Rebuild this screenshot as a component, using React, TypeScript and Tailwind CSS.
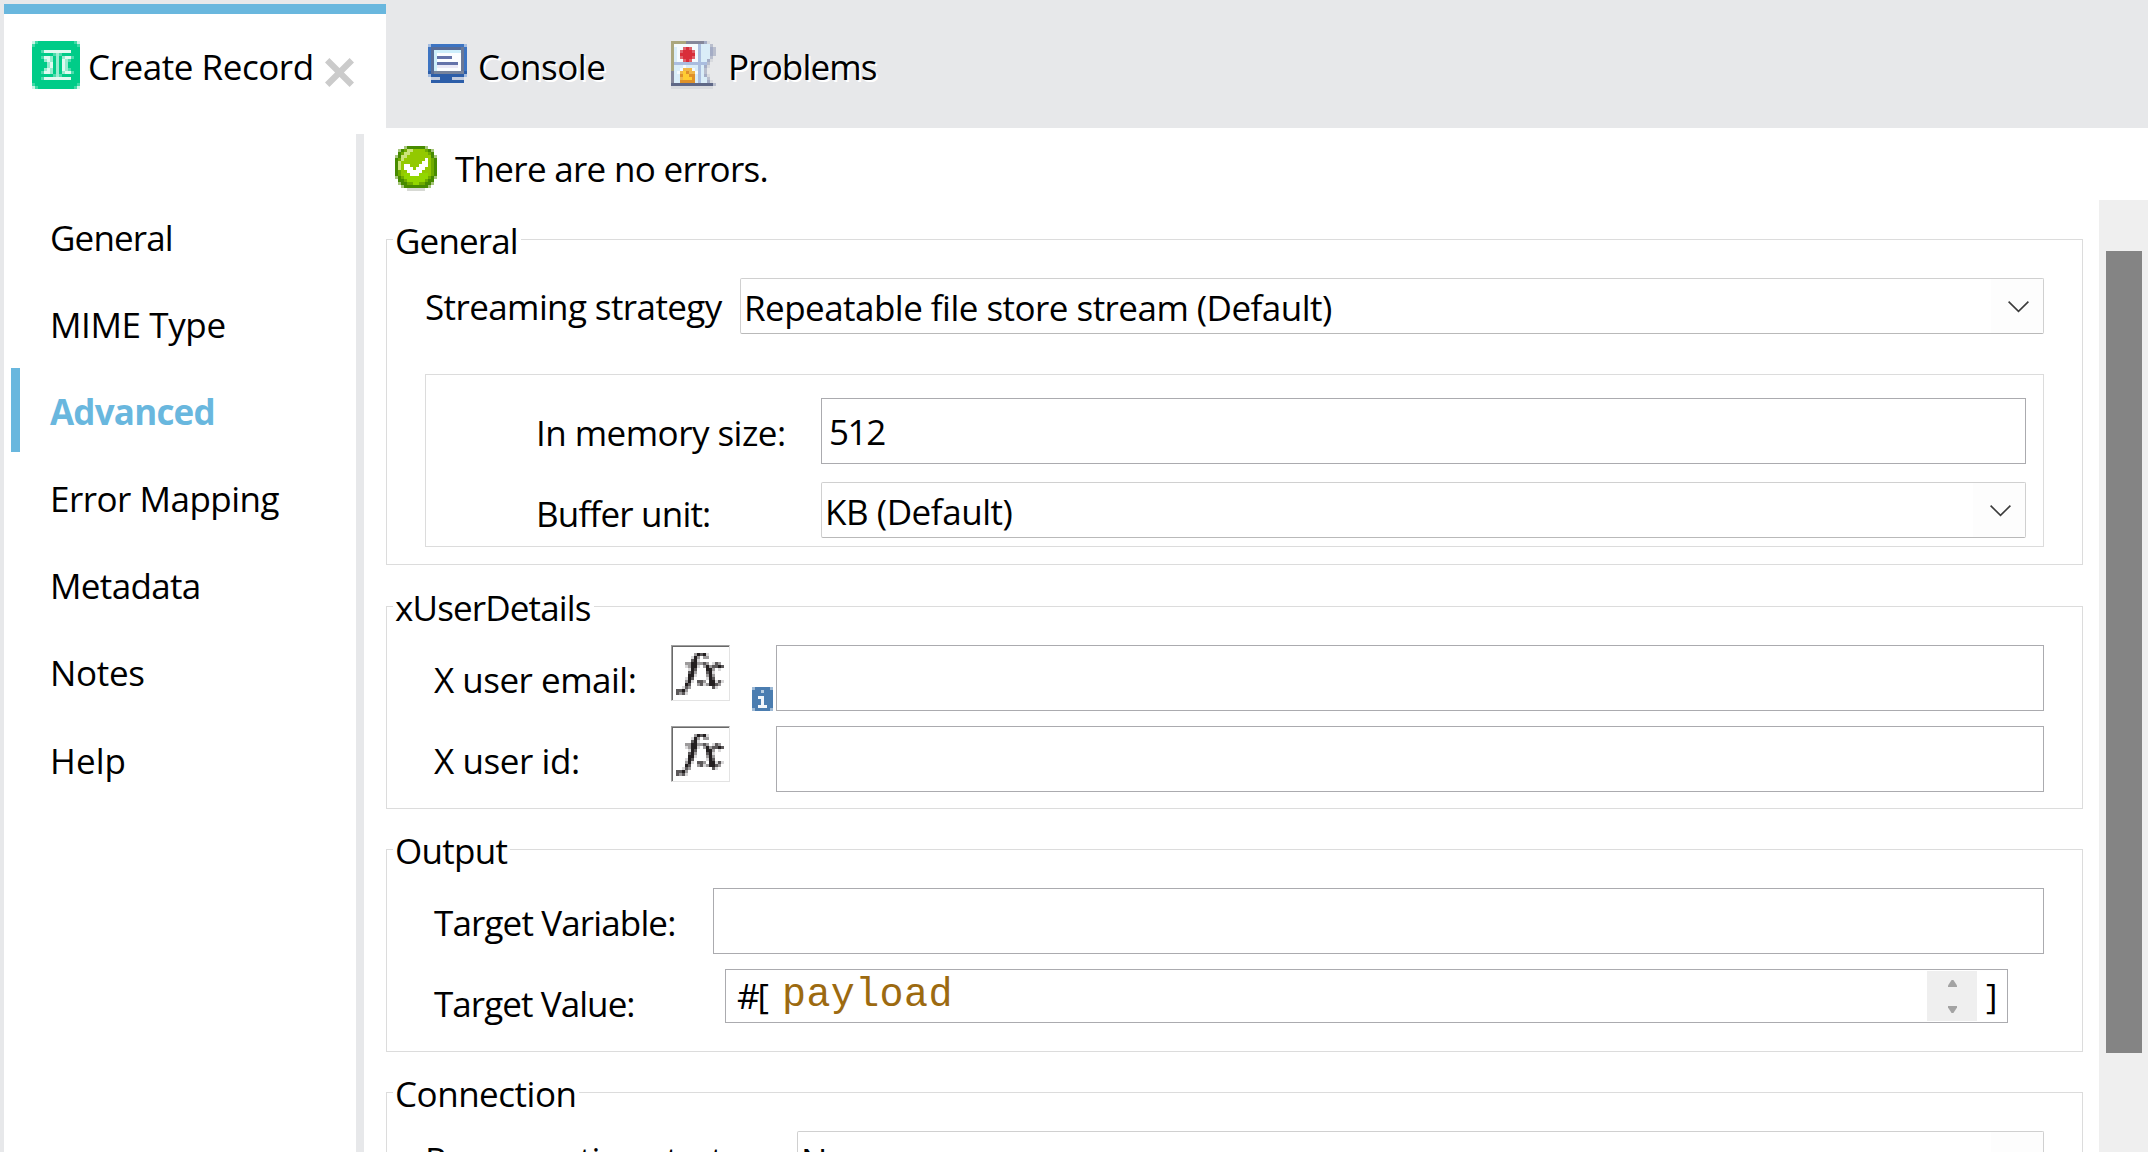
import React from "react";

type Palette = Record<string, string>;

/** Draws a small bitmap-style icon, three screen pixels per cell. */
function PixelIcon({ rows, palette, className }: { rows: string[]; palette: Palette; className?: string }) {
  const width = Math.max(...rows.map((r) => r.length));
  return (
    <svg
      width={width * 3}
      height={rows.length * 3}
      viewBox={`0 0 ${width} ${rows.length}`}
      shapeRendering="crispEdges"
      className={`block shrink-0 ${className ?? ""}`}
    >
      {rows.map((row, y) =>
        row.split("").map((c, x) =>
          palette[c] ? <rect key={`${x}-${y}`} x={x} y={y} width={1} height={1} fill={palette[c]} /> : null,
        ),
      )}
    </svg>
  );
}

const recordRows = [
  "pqaaaaaaaaaaaaqp",
  "qaaaaaaaaaaaaaaq",
  "aaaaaaaaaaaaaaaa",
  "aaalwwwwwwwwwaaa",
  "aaaaaaalmlaaaaaa",
  "aaalwwmamamwwlaa",
  "aaaamwmamawmlaaa",
  "aaaaamwamawmaaaa",
  "aaaaamwamawmaaaa",
  "aaaamwmamawmlaaa",
  "aaalwwmamamwwlaa",
  "aaaaaaalmlaaaaaa",
  "aaalwwwwwwwwwaaa",
  "aaaaaaaaaaaaaaaa",
  "qaaaaaaaaaaaaaaq",
  "pqaaaaaaaaaaaaqp",
];
const recordPalette = { a: "#00cc88", w: "#e0f9f0", m: "#99ebcf", l: "#4ddbac", p: "#ccf5e7", q: "#40d9a6" };

const consoleRows = [
  "pBBBBBBBBBBBp",
  "BssssssssssSB",
  "BscccccccccSB",
  "BscwwwwwwwwSB",
  "BscnnnnnwwwSB",
  "BscwwwwwwwwSB",
  "BscnnnnnnnwSB",
  "BscvvvvvvvwSB",
  "BscwwwwwwwwSB",
  "DsggggggggggD",
  "pDDDDDDDDDDDp",
  ".iiiDDDDiiii.",
  ".DDDDDDDDDDD.",
];
const consolePalette = {
  p: "#a3bbdf", B: "#3d74c2", s: "#576c97", S: "#6a7896", c: "#cdeefb", w: "#fbfdff",
  n: "#6473aa", v: "#e9e8f6", g: "#76839c", D: "#2d5ea9", i: "#c2cbdd",
};

const problemsRows = [
  "tttttuuuuuuyz..",
  "twwwwwwwwbcccg.",
  "tcwwrRrwwbcccyg",
  "tcwrRRRrwbcccyg",
  "tcwRRRRRwbcccyg",
  "tcwrRRRrwbcccg.",
  "tcwwrRrwwbccyz.",
  "tbbbbbbbbbbbg..",
  "tcccwccccbcyz..",
  "tccwooowcbcg...",
  "ucwoYOoowbcg...",
  "uccOYYOOcbcyz..",
  "uccoYYYOcbccg..",
  "uccOOOOOcbccyz.",
  "ddddddddddddddg",
  "zzzzzzzzzzzzzz.",
];
const problemsPalette = {
  t: "#aba77d", u: "#85879a", w: "#f4fafd", c: "#daedf8", b: "#aabddf", r: "#df626b", R: "#d92d3a",
  o: "#f0b84b", O: "#df9129", Y: "#ffcc32", y: "#a4acc5", g: "#b9becd", z: "#d8dade", d: "#5e6786",
};

const okRows = [
  "...pddddddp...",
  ".pdgllmmmmgdp.",
  ".dgllmmmmmmgd.",
  "pdllmmmmmmmmdp",
  "dglmmmmmmmwmgd",
  "dlmmmmmmmwwmgd",
  "dlmwwmmmwwwmgd",
  "dlmwwwmwwwmmgd",
  "dgmmwwwwwmmmgd",
  "dgmnnwwwnnnmgd",
  "pdgnnnnnnnngdp",
  ".ddgnnnnnngdd.",
  ".pddggnnggddp.",
  "..pddddddddp..",
  "....zzzzzz....",
];
const okPalette = {
  p: "#a7c67c", d: "#478b00", g: "#6fab00", l: "#cbe37b", m: "#93c900", n: "#92d600", w: "#ffffff", z: "#d7d9d4",
};

const fxRows = [
  "......gkdkl.....",
  ".....lkg.gg.....",
  ".....dkl........",
  "...ggkkggdg.ldg.",
  "...lgkkl.gkgddkd",
  "....lkd...kkg.l.",
  "....dkg...dkl...",
  "....kkl...gkg...",
  "...lkd....lkd...",
  "...gkl.ddg.kkldl",
  "...kd..gdlgkkdg.",
  "..ldg.......dl..",
  "ddkg............",
  "dgdl............",
];
const fxPalette = { k: "#231f20", d: "#5c595a", g: "#9c9a9b", l: "#d8d7d8" };

const infoRows = ["pbbbbbp", "bbbqbbb", "bbbbbbb", "bbwwbbb", "bbbwbbb", "bbbwbbb", "bbwwwbb", "pbbbbbp"];
const infoPalette = { b: "#4b7db0", p: "#9db9d5", q: "#b7cce0", w: "#f2f6fa" };

function Text({ children, className }: { children: React.ReactNode; className?: string }) {
  return <span className={`block shrink-0 whitespace-nowrap pt-px leading-[48px] ${className ?? ""}`}>{children}</span>;
}

function Combo({ text, className }: { text: React.ReactNode; className?: string }) {
  return (
    <div
      className={`flex h-14 shrink-0 justify-between rounded-[2px] border border-[#d0d0d0] border-b-[#b9b9b9] bg-white pl-[3px] ${className ?? ""}`}
    >
      <div className="pt-1">{text}</div>
      <div className="flex w-[52px] justify-end bg-[#fdfdfd] pr-[14px] pt-[22px]">
        <svg width="21" height="12" viewBox="0 0 21 12" fill="none" stroke="#3b3b3b" strokeWidth="1.6">
          <path d="M0.6 0.6 L10.5 10.4 L20.4 0.6" />
        </svg>
      </div>
    </div>
  );
}

function Input({ children, className }: { children?: React.ReactNode; className?: string }) {
  return <div className={`h-[66px] shrink-0 border border-[#ababaf] bg-white ${className ?? ""}`}>{children}</div>;
}

function Group({ legend, className, children }: { legend: React.ReactNode; className?: string; children: React.ReactNode }) {
  return (
    <section className={`relative w-[1697px] shrink-0 border border-[#dcdcdc] pt-[38px] ${className ?? ""}`}>
      <div className="absolute -top-[24px] left-[6px] bg-white pl-[2px] pr-[3px]">{legend}</div>
      {children}
    </section>
  );
}

function FxButton() {
  return (
    <div className="h-14 w-[59px] shrink-0 border border-b-[#e3e3e3] border-l-[#a0a0a0] border-r-[#e3e3e3] border-t-[#a0a0a0]">
      <div className="h-full border-l border-t border-[#696969] pl-[3px] pt-[6px]">
        <PixelIcon rows={fxRows} palette={fxPalette} />
      </div>
    </div>
  );
}

const navItems = [
  { label: "General", track: "tracking-[-0.85px]" },
  { label: "MIME Type", track: "tracking-[-0.39px]" },
  { label: "Advanced", track: "tracking-[-0.79px]", active: true },
  { label: "Error Mapping", track: "tracking-[-0.5px]" },
  { label: "Metadata", track: "tracking-[-0.65px]" },
  { label: "Notes", track: "tracking-[-0.3px]" },
  { label: "Help", track: "tracking-[0.1px]" },
];

export default function App() {
  return (
    <div className="flex h-[1152px] w-[2148px] flex-col overflow-hidden border-l-4 border-[#e7e8ea] bg-white font-['Open_Sans','Noto_Sans',sans-serif] text-[35px] text-black">
      <header className="flex h-32 shrink-0 bg-[#e7e8ea] pt-1">
        <div className="flex w-[382px] border-t-[10px] border-[#69b7de] bg-white pl-7 pt-[27px]">
          <PixelIcon rows={recordRows} palette={recordPalette} />
          <Text className="ml-2 mt-[1px] w-[237px] tracking-[-0.45px]">Create Record</Text>
          <svg width="29" height="29" viewBox="0 0 29 29" stroke="#cbcbcb" strokeWidth="6.2" className="mt-[17px] shrink-0">
            <path d="M2.2 2.2 L26.8 26.8 M26.8 2.2 L2.2 26.8" />
          </svg>
        </div>
        <div className="flex pl-[42px] pt-[37px] [text-shadow:2px_2px_0_#fff]">
          <PixelIcon rows={consoleRows} palette={consolePalette} className="mt-[3px]" />
          <Text className="ml-[11px] mt-[1px] w-[193px] tracking-[-0.5px]">Console</Text>
          <PixelIcon rows={problemsRows} palette={problemsPalette} />
          <Text className="ml-[12px] mt-[1px] tracking-[-0.85px]">Problems</Text>
        </div>
      </header>

      <div className="flex min-h-0 flex-1">
        <nav className="w-[352px] shrink-0 pt-[65px]">
          {navItems.map((item) => (
            <div key={item.label} className="flex h-[87.1px]">
              <div className={item.active ? "ml-[7px] mt-[1px] h-[84px] w-[9px] bg-[#69b7de]" : "ml-[7px] w-[9px]"} />
              <Text className={`ml-[30px] mt-5 ${item.active ? "font-bold text-[#69b7de]" : ""} ${item.track}`}>{item.label}</Text>
            </div>
          ))}
        </nav>
        <div className="mt-[6px] w-2 shrink-0 bg-[#e7e8ea]" />

        <main className="flex min-w-0 flex-1 flex-col">
          <div className="flex h-[72px] shrink-0 pl-[31px] pt-[16px]">
            <PixelIcon rows={okRows} palette={okPalette} className="mt-[2px]" />
            <Text className="ml-[18px] tracking-[-0.7px]">There are no errors.</Text>
          </div>

          <div className="flex min-h-0 flex-1">
            <div className="flex w-[1735px] shrink-0 flex-col pl-[22px] pt-[39px]">
              <Group legend={<Text className="tracking-[-0.85px]">General</Text>} className="h-[326px]">
                <div className="flex pl-[38px]">
                  <Text className="mt-1 w-[315px] tracking-[-0.6px]">Streaming strategy</Text>
                  <Combo
                    className="w-[1304px]"
                    text={<Text className="tracking-[-0.53px]">Repeatable file store stream (Default)</Text>}
                  />
                </div>
                <div className="ml-[38px] mt-10 flex h-[173px] w-[1619px] flex-col gap-[18px] border border-[#dcdcdc] pl-[110px] pt-[23px]">
                  <div className="flex">
                    <Text className="mt-[10px] w-[285px] tracking-[-0.53px]">In memory size:</Text>
                    <Input className="w-[1205px] pl-[7px] pt-2">
                      <Text className="tracking-[-1.4px]">512</Text>
                    </Input>
                  </div>
                  <div className="flex">
                    <Text className="mt-[7px] w-[285px] tracking-[-0.8px]">Buffer unit:</Text>
                    <Combo className="w-[1205px]" text={<Text className="tracking-[-0.45px]">KB (Default)</Text>} />
                  </div>
                </div>
              </Group>

              <Group legend={<Text className="tracking-[-0.85px]">xUserDetails</Text>} className="mt-[41px] h-[203px]">
                <div className="flex flex-col gap-[15px] pl-[47px]">
                  <div className="flex">
                    <Text className="mt-[10px] w-[237px] tracking-[-0.5px]">X user email:</Text>
                    <FxButton />
                    <PixelIcon rows={infoRows} palette={infoPalette} className="ml-[22px] mt-[42px]" />
                    <Input className="ml-[3px] w-[1268px]" />
                  </div>
                  <div className="flex">
                    <Text className="mt-[10px] w-[237px] tracking-[-0.43px]">X user id:</Text>
                    <FxButton />
                    <Input className="ml-[46px] w-[1268px]" />
                  </div>
                </div>
              </Group>

              <Group legend={<Text className="tracking-[-0.7px]">Output</Text>} className="mt-10 h-[203px]">
                <div className="flex flex-col gap-[15px] pl-[47px]">
                  <div className="flex">
                    <Text className="mt-[10px] w-[279px] tracking-[-0.86px]">Target Variable:</Text>
                    <Input className="w-[1331px]" />
                  </div>
                  <div className="flex">
                    <Text className="mt-[10px] w-[291px] tracking-[-0.93px]">Target Value:</Text>
                    <div className="flex h-[54px] w-[1283px] border border-[#ababaf] bg-white">
                      <Text className="ml-[11px] mt-[1px] w-[45px] tracking-[-2px]">#[</Text>
                      <span className="flex-1 pt-[2px] font-['Liberation_Mono',monospace] text-[40px] leading-[48px] tracking-[0.4px] text-[#9c6a10]">
                        payload
                      </span>
                      <div className="mt-[1px] flex h-[50px] w-[50px] flex-col items-center justify-between bg-[#efefef] py-2">
                        <svg width="9" height="7" viewBox="0 0 9 7" fill="#a3a3a3" className="mt-[1px]">
                          <path d="M3.6 0 H5.4 L9 5.4 V7 H0 V5.4 Z" />
                        </svg>
                        <svg width="9" height="7" viewBox="0 0 9 7" fill="#a3a3a3">
                          <path d="M3.6 7 H5.4 L9 1.6 V0 H0 V1.6 Z" />
                        </svg>
                      </div>
                      <Text className="ml-[9px] mt-[1px] w-[21px]">]</Text>
                    </div>
                  </div>
                </div>
              </Group>

              <Group legend={<Text className="tracking-[-0.48px]">Connection</Text>} className="mt-10 h-[203px]">
                <div className="flex pl-[38px]">
                  <Text className="mt-1 w-[372px] tracking-[-0.5px]">Reconnection strategy</Text>
                  <Combo className="w-[1247px]" text={<Text className="tracking-[-0.5px]">None</Text>} />
                </div>
              </Group>
            </div>

            <div className="flex-1 bg-[#efefef] pl-[7px] pt-[51px]">
              <div className="h-[802px] w-9 bg-[#848484]" />
            </div>
          </div>
        </main>
      </div>
    </div>
  );
}
